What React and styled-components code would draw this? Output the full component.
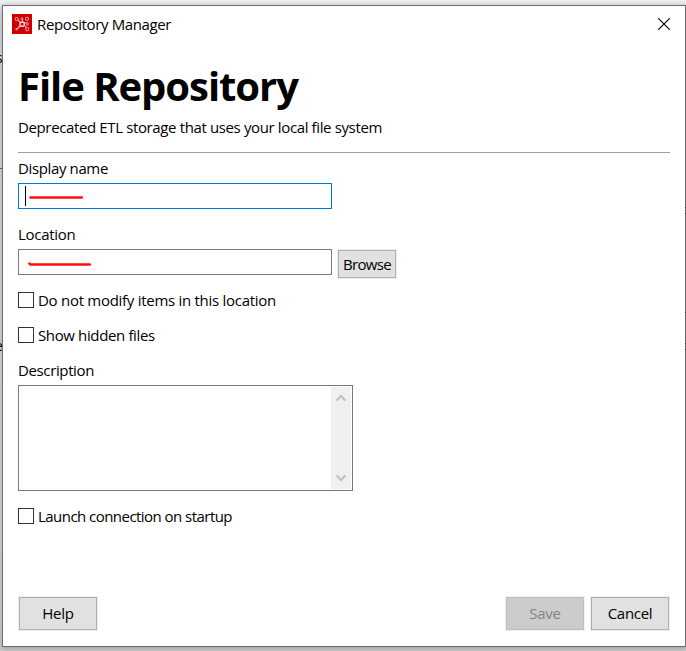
import React from 'react';
import styled, { createGlobalStyle } from 'styled-components';

const GlobalStyle = createGlobalStyle`
  *, *::before, *::after { box-sizing: border-box; }
  body {
    margin: 0;
    background: #dcdcdc;
    color: #000;
    font: 15px/20px 'Open Sans', 'Noto Sans', sans-serif;
    overflow: hidden;
  }
`;

const Desktop = styled.div`
  position: relative;
  width: 686px;
  height: 651px;
  padding: 5px 0 4px 2px;
  overflow: hidden;
  background: linear-gradient(#f0f0f0, #dedede 20px, #dadada 600px, #cecece);
`;

/* Slivers of the page that show past the edges of the dialog. */
const Sliver = styled.span`
  position: absolute;
  top: ${(p) => p.$top}px;
  left: ${(p) => p.$left}px;
  font-size: 14px;
`;

const EdgeMark = styled.i`
  position: absolute;
  left: ${(p) => p.$left}px;
  top: ${(p) => p.$top}px;
  width: ${(p) => p.$w || 1}px;
  height: 1px;
  background: ${(p) => p.$color || '#333'};
`;

const Dialog = styled.main`
  position: relative;
  display: flex;
  flex-direction: column;
  width: 684px;
  height: 642px;
  border: 1px solid #6e6e6e;
  background: #fff;
  box-shadow: 0 1px 6px rgba(0, 0, 0, 0.3);
`;

const TitleBar = styled.header`
  display: flex;
  align-items: center;
  height: 36px;
  padding: 0 15px 0 9px;
  flex: none;
`;

const Title = styled.span`
  margin-left: 5px;
  flex: 1;
`;

const CloseButton = styled.button`
  display: flex;
  padding: 0;
  border: 0;
  background: none;
`;

const Label = styled.span`
  letter-spacing: ${(p) => p.$track || 0}px;
  white-space: nowrap;
`;

const Body = styled.section`
  display: flex;
  flex-direction: column;
  flex: 1;
  padding: 0 15px 16px;
`;

const Heading = styled.h1`
  margin: 16px 0 0;
  height: 58px;
  font-size: 40px;
  line-height: 56px;
  font-weight: 700;
  letter-spacing: -1.05px;
  white-space: nowrap;
`;

const Intro = styled.p`
  margin: 1px 0 0;
  height: 36px;
  border-bottom: 1px solid #a0a0a0;
`;

const Field = styled.div`
  display: flex;
  flex-direction: column;
  margin-top: ${(p) => p.$gap}px;
`;

const FieldName = styled.div`
  height: 20px;
  margin-bottom: 5px;
`;

const FieldRow = styled.div`
  display: flex;
  height: 26px;
`;

const TextBox = styled.div`
  display: flex;
  align-items: center;
  gap: 2px;
  width: 314px;
  height: 26px;
  border: 1px solid ${(p) => (p.$focused ? '#0078d7' : '#7a7a7a')};
  padding-left: ${(p) => (p.$focused ? 6 : 8)}px;
`;

const Caret = styled.i`
  width: 1px;
  height: 20px;
  background: #000;
`;

const Check = styled.label`
  display: flex;
  align-items: center;
  height: 20px;
  gap: 4px;
  margin-top: 15px;
`;

const Box = styled.span`
  width: 16px;
  height: 16px;
  border: 1px solid #333;
`;

const TextArea = styled.div`
  display: flex;
  justify-content: flex-end;
  width: 335px;
  height: 106px;
  border: 1px solid #7a7a7a;
  padding: 1px;
`;

const ScrollBar = styled.div`
  display: flex;
  flex-direction: column;
  justify-content: space-between;
  align-items: center;
  width: 20px;
  padding: 7px 1px 7px 0;
  background: #f0f0f0;
`;

const Button = styled.button`
  flex: none;
  width: ${(p) => p.$w}px;
  height: ${(p) => p.$h}px;
  margin: ${(p) => p.$margin || 0};
  padding: 0 0 ${(p) => p.$lift || 0}px;
  border: 1px solid #adadad;
  background: #e1e1e1;
  box-shadow: 0 0 0 1px #f0f0f0;
  color: #000;
  font: inherit;
  &:disabled {
    border-color: #bfbfbf;
    background: #ccc;
    color: #838383;
  }
`;

const Footer = styled.footer`
  display: flex;
  gap: 7px;
  margin: auto 1px 0;
`;

const Spacer = styled.span`
  flex: 1;
`;

function AppIcon() {
  return (
    <svg width="20" height="20" viewBox="0 0 20 20" fill="none" stroke="#f3a9a9">
      <path fill="#cc0000" stroke="none" d="M0 0h20v20H0z" />
      <path strokeWidth="1.2" d="M6 6l2.5 2.5M10.5 8.5V6M13 11.5l1.5 2M8 12l-3.5 3.5M12 9l2.5-.3" />
      <circle cx="4.7" cy="5" r="1.6" />
      <circle cx="10" cy="4.8" r="1" />
      <circle cx="15" cy="4.8" r="1.6" />
      <circle cx="15.3" cy="9.8" r="1.1" />
      <circle cx="15.2" cy="15.2" r="1.7" />
      <circle cx="4.4" cy="15.3" r=".7" />
      <rect x="8" y="8.2" width="4.2" height="4" rx="1" strokeWidth="1.5" stroke="#fbd5d5" />
    </svg>
  );
}

function Stroke({ width, dot }) {
  return (
    <svg width={width + 4} height="8" viewBox={`0 0 ${width + 4} 8`} fill="none" stroke="#ff0f0f" strokeLinecap="round">
      <path strokeWidth="2.3" d={dot ? `M2.3 5.5L3.5 6.5H${width + 1}` : `M2.3 5.5H${width + 1}`} />
    </svg>
  );
}

function Chevron({ down }) {
  return (
    <svg width="10" height="8" viewBox="0 0 10 8" fill="none" stroke="#bfbfbf" strokeWidth="2">
      <path d={down ? 'M.6 1.5L5 6l4.4-4.5' : 'M.6 6.5L5 2l4.4 4.5'} />
    </svg>
  );
}

export default function App() {
  return (
    <>
      <GlobalStyle />
      <Desktop>
        <Sliver $top={48} $left={-4}>s</Sliver>
        <Sliver $top={336} $left={-5}>e</Sliver>
        <EdgeMark $left={0} $top={168} $w={2} $color="#52687c" />
        <Dialog>
          <TitleBar>
            <AppIcon />
            <Title><Label $track={-0.37}>Repository Manager</Label></Title>
            <CloseButton aria-label="Close">
              <svg width="12" height="12" viewBox="0 0 12 12" stroke="#000" strokeWidth="1.1">
                <path d="M0 0l12 12M12 0L0 12" />
              </svg>
            </CloseButton>
          </TitleBar>
          <Body>
            <Heading>File Repository</Heading>
            <Intro><Label $track={-0.37}>Deprecated ETL storage that uses your local file system</Label></Intro>
            <Field $gap={5}>
              <FieldName><Label $track={-0.37}>Display name</Label></FieldName>
              <TextBox $focused><Caret /><Stroke width={53} /></TextBox>
            </Field>
            <Field $gap={15}>
              <FieldName><Label $track={-0.3}>Location</Label></FieldName>
              <FieldRow>
                <TextBox><Stroke width={62} dot /></TextBox>
                <Button $w={58} $h={28} $margin="1px 0 0 6px"><Label $track={-0.65}>Browse</Label></Button>
              </FieldRow>
            </Field>
            <Check><Box /><Label $track={-0.28}>Do not modify items in this location</Label></Check>
            <Check><Box /><Label $track={-0.37}>Show hidden files</Label></Check>
            <Field $gap={15}>
              <FieldName><Label $track={-0.37}>Description</Label></FieldName>
              <TextArea>
                <ScrollBar><Chevron /><Chevron down /></ScrollBar>
              </TextArea>
            </Field>
            <Check><Box /><Label $track={-0.54}>Launch connection on startup</Label></Check>
            <Footer>
              <Button $w={78} $h={33} $lift={2}><Label $track={-0.2}>Help</Label></Button>
              <Spacer />
              <Button $w={78} $h={33} $lift={2} disabled><Label $track={-0.3}>Save</Label></Button>
              <Button $w={78} $h={33} $lift={2}><Label $track={-0.3}>Cancel</Label></Button>
            </Footer>
          </Body>
        </Dialog>
        <EdgeMark $left={685} $top={207} />
        <EdgeMark $left={685} $top={213} />
        <EdgeMark $left={685} $top={312} />
        <EdgeMark $left={685} $top={343} />
        <EdgeMark $left={685} $top={349} />
      </Desktop>
    </>
  );
}
